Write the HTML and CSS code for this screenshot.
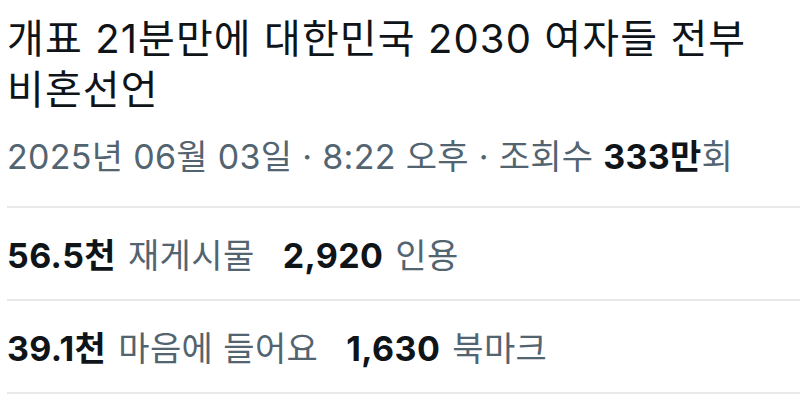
FILE: index.html
```html
<!DOCTYPE html>
<html lang="ko">
<head>
    <meta charset="UTF-8">
    <meta name="viewport" content="width=device-width, initial-scale=1.0">
    <title>게시물</title>
    <link rel="stylesheet" href="styles.css">
</head>
<body>
    <div class="post">
        <h1 class="post-text">개표 21분만에 대한민국 2030 여자들 전부 비혼선언</h1>
        <div class="post-meta">
            <span>2025년 06월 03일</span> · <span>8:22 오후</span> · <span>조회수 <b>333만</b>회</span>
        </div>

        <div class="stats">
            <span class="stat"><b>56.5천</b> 재게시물</span>
            <span class="stat"><b>2,920</b> 인용</span>
        </div>
        <div class="stats">
            <span class="stat"><b>39.1천</b> 마음에 들어요</span>
            <span class="stat"><b>1,630</b> 북마크</span>
        </div>
    </div>
</body>
</html>
```

FILE: styles.css
```css
body {
    margin: 0;
    background-color: white;
    font-family: Inter, "Noto Sans CJK KR", sans-serif;
    color: #0f1419;
}
.post {
    padding: 13px 0 0 7px;
}
.post-text {
    margin: 0;
    padding-right: 20px;
    font-size: 40px;
    font-weight: 400;
    line-height: 51px;
    letter-spacing: 1.1px;
    word-break: keep-all;
}
.post-meta {
    margin-top: 20px;
    padding-bottom: 27px;
    font-size: 34px;
    line-height: 44px;
    letter-spacing: 0.3px;
    color: #536471;
    border-bottom: 2px solid #e7e9ea;
}
.post-meta b {
    color: #0f1419;
}
.stats {
    display: flex;
    gap: 28px;
    align-items: center;
    height: 91px;
    font-size: 34px;
    letter-spacing: 0.4px;
    color: #536471;
    border-bottom: 2px solid #e7e9ea;
}
.stats b {
    color: #0f1419;
    font-weight: 700;
    margin-right: 2px;
}
```
